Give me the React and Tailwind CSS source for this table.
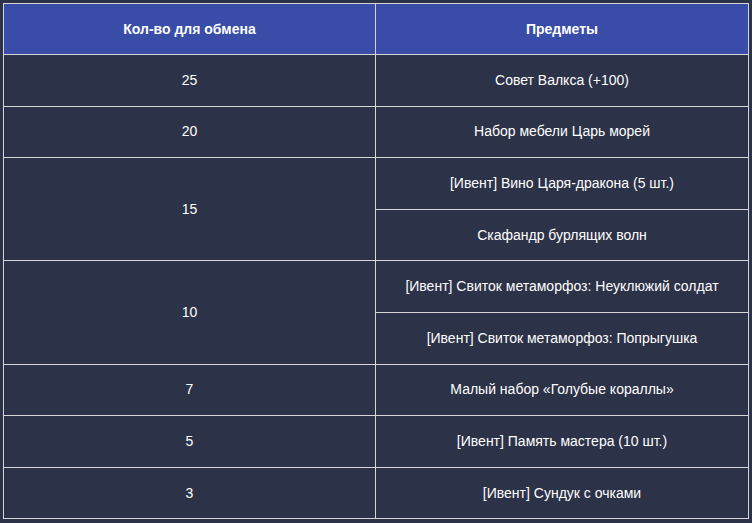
const rows = [
  { qty: "25", items: ["Совет Валкса (+100)"] },
  { qty: "20", items: ["Набор мебели Царь морей"] },
  { qty: "15", items: ["[Ивент] Вино Царя-дракона (5 шт.)", "Скафандр бурлящих волн"] },
  { qty: "10", items: ["[Ивент] Свиток метаморфоз: Неуклюжий солдат", "[Ивент] Свиток метаморфоз: Попрыгушка"] },
  { qty: "7", items: ["Малый набор «Голубые кораллы»"] },
  { qty: "5", items: ["[Ивент] Память мастера (10 шт.)"] },
  { qty: "3", items: ["[Ивент] Сундук с очками"] },
];

export default function App() {
  return (
    <div className="w-[752px] h-[523px] bg-[#2c3247] pt-[3px] pl-[3px] font-['Liberation_Sans',Arial,sans-serif] text-white text-[14px]">
      <table className="w-[746px] border-collapse border border-[#d6d6d6] table-fixed">
        <thead>
          <tr className="h-[51px] bg-[#384ca8]">
            <th className="w-[372px] border border-[#d6d6d6] font-bold text-[14px] text-center">Кол-во для обмена</th>
            <th className="border border-[#d6d6d6] font-bold text-[14px] text-center">Предметы</th>
          </tr>
        </thead>
        <tbody>
          {rows.map((r) =>
            r.items.map((item, i) => (
              <tr key={r.qty + i} className="h-[51.6px]">
                {i === 0 && (
                  <td rowSpan={r.items.length} className="border border-[#d6d6d6] text-center">
                    {r.qty}
                  </td>
                )}
                <td className="border border-[#d6d6d6] text-center">{item}</td>
              </tr>
            ))
          )}
        </tbody>
      </table>
    </div>
  );
}
